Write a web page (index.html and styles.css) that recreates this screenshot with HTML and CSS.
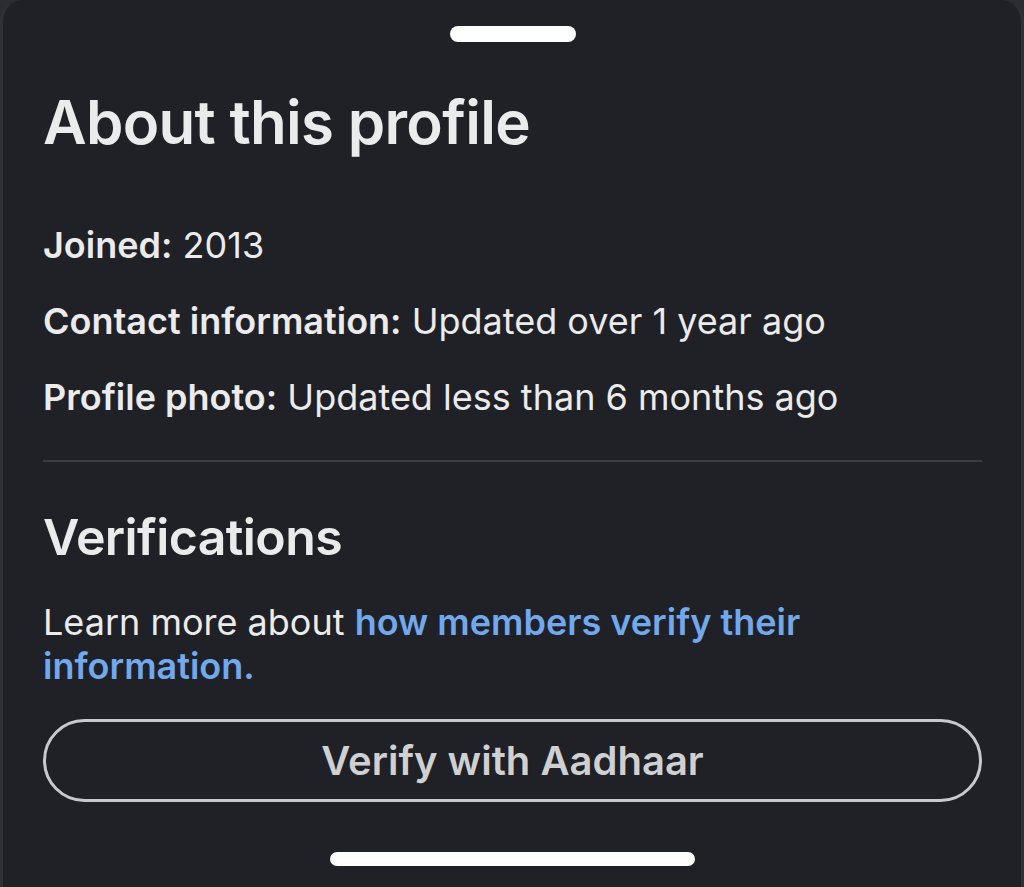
FILE: index.html
```html
<!DOCTYPE html>
<html lang="en">
<head>
  <meta charset="UTF-8" />
  <meta name="viewport" content="width=device-width, initial-scale=1.0" />
  <title>About this profile</title>
  <link rel="stylesheet" href="styles.css">
</head>
<body>
  <div class="sheet">
    <div class="grabber"></div>

    <h1 class="title">About this profile</h1>

    <ul class="facts">
      <li><strong>Joined:</strong> 2013</li>
      <li><strong>Contact information:</strong> Updated over 1 year ago</li>
      <li><strong>Profile photo:</strong> Updated less than 6 months ago</li>
    </ul>

    <hr class="divider">

    <h2 class="section-title">Verifications</h2>
    <p class="learn">Learn more about <a href="#">how members verify their information.</a></p>

    <button class="verify-btn">Verify with Aadhaar</button>

    <div class="home-bar"></div>
  </div>
</body>
</html>
```

FILE: styles.css
```css
* {
  box-sizing: border-box;
  margin: 0;
  padding: 0;
}

html, body {
  background-color: #2b2d31;
}

body {
  font-family: Inter, "Noto Sans", sans-serif;
  color: #ebebec;
}

.sheet {
  min-height: 887px;
  background-color: #1f2126;
  border-left: 3px solid #2e3135;
  border-right: 3px solid #2e3135;
  border-radius: 22px 22px 0 0;
  padding: 26px 39px 0 40px;
  display: flex;
  flex-direction: column;
}

.grabber {
  width: 126px;
  height: 16px;
  margin: 0 auto;
  background-color: #fff;
  border-radius: 8px;
}

.title {
  margin-top: 44px;
  font-size: 60px;
  line-height: 72px;
  font-weight: 600;
  letter-spacing: -0.7px;
}

.facts {
  list-style: none;
  margin-top: 65px;
  display: flex;
  flex-direction: column;
  gap: 32px;
}

.facts li {
  font-size: 36px;
  line-height: 44px;
}

.facts strong {
  font-weight: 600;
}

.divider {
  border: none;
  height: 2px;
  background-color: #3a3c41;
  margin-top: 41px;
}

.section-title {
  margin-top: 45px;
  font-size: 50px;
  line-height: 60px;
  font-weight: 600;
  letter-spacing: -0.6px;
}

.learn {
  margin-top: 33px;
  font-size: 36px;
  line-height: 44px;
}

.learn a {
  color: #72a8ec;
  font-weight: 600;
  text-decoration: none;
}

.verify-btn {
  margin-top: 31px;
  height: 83px;
  width: 100%;
  background: transparent;
  border: 3px solid #c8c9cb;
  border-radius: 42px;
  color: #cfd0d2;
  font-family: inherit;
  font-size: 40px;
  font-weight: 600;
}

.home-bar {
  width: 365px;
  height: 14px;
  margin: 50px auto 0;
  background-color: #fff;
  border-radius: 7px;
}
```
